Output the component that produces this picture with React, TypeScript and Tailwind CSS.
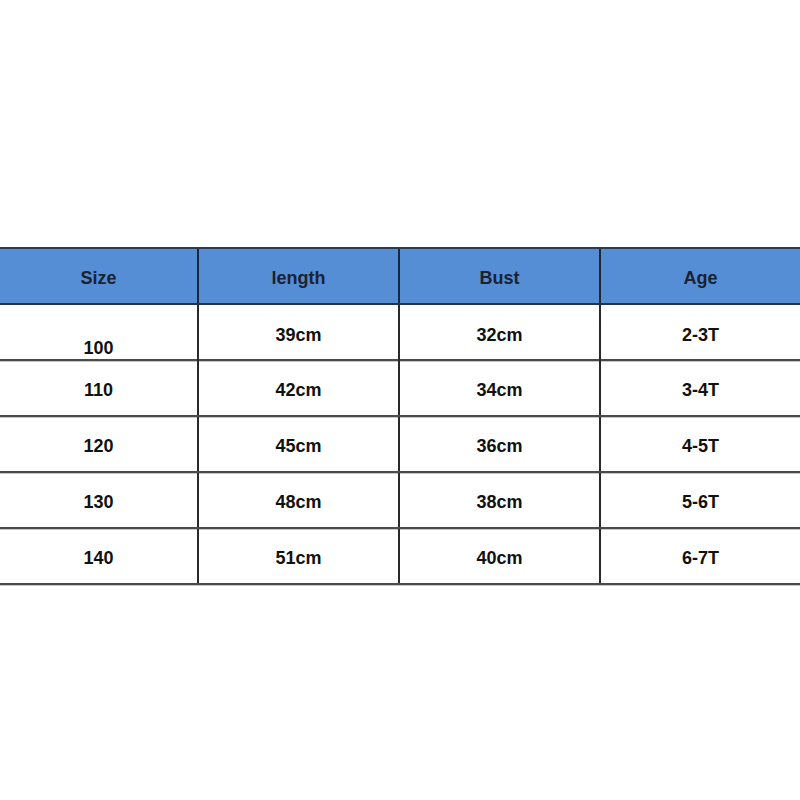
const header = ["Size", "length", "Bust", "Age"];

const rows = [
  ["100", "39cm", "32cm", "2-3T"],
  ["110", "42cm", "34cm", "3-4T"],
  ["120", "45cm", "36cm", "4-5T"],
  ["130", "48cm", "38cm", "5-6T"],
  ["140", "51cm", "40cm", "6-7T"],
];

const cols = "grid grid-cols-[199px_201px_201px_199px]";

export default function App() {
  return (
    <div
      className="w-[800px] h-[800px] bg-white pt-[247px]"
      style={{ fontFamily: '"Liberation Sans", Arial, sans-serif' }}
    >
      <div className="border-t-2 border-[#2a3a55]">
        <div className={`${cols} h-[56px] bg-[#558ed5] border-b-2 border-[#24324a]`}>
          {header.map((h, i) => (
            <div
              key={h}
              className={`flex items-center justify-center pt-[4px] text-[18px] font-bold text-[#1b2230] ${
                i < 3 ? "border-r-2 border-[#1e2738]" : ""
              }`}
            >
              {h}
            </div>
          ))}
        </div>
        {rows.map((r, ri) => (
          <div
            key={r[0]}
            className={`${cols} h-[56px] border-b-2 border-[#4a4a4a] shadow-[0_1px_0_#c8c8c8]`}
          >
            {r.map((c, ci) => (
              <div
                key={ci}
                className={`flex justify-center text-[18px] font-bold text-[#111] ${
                  ri === 0 && ci === 0 ? "items-start pt-[30px]" : "items-center pt-[4px]"
                } ${ci < 3 ? "border-r-2 border-[#2a2a2a]" : ""}`}
              >
                {c}
              </div>
            ))}
          </div>
        ))}
      </div>
    </div>
  );
}
